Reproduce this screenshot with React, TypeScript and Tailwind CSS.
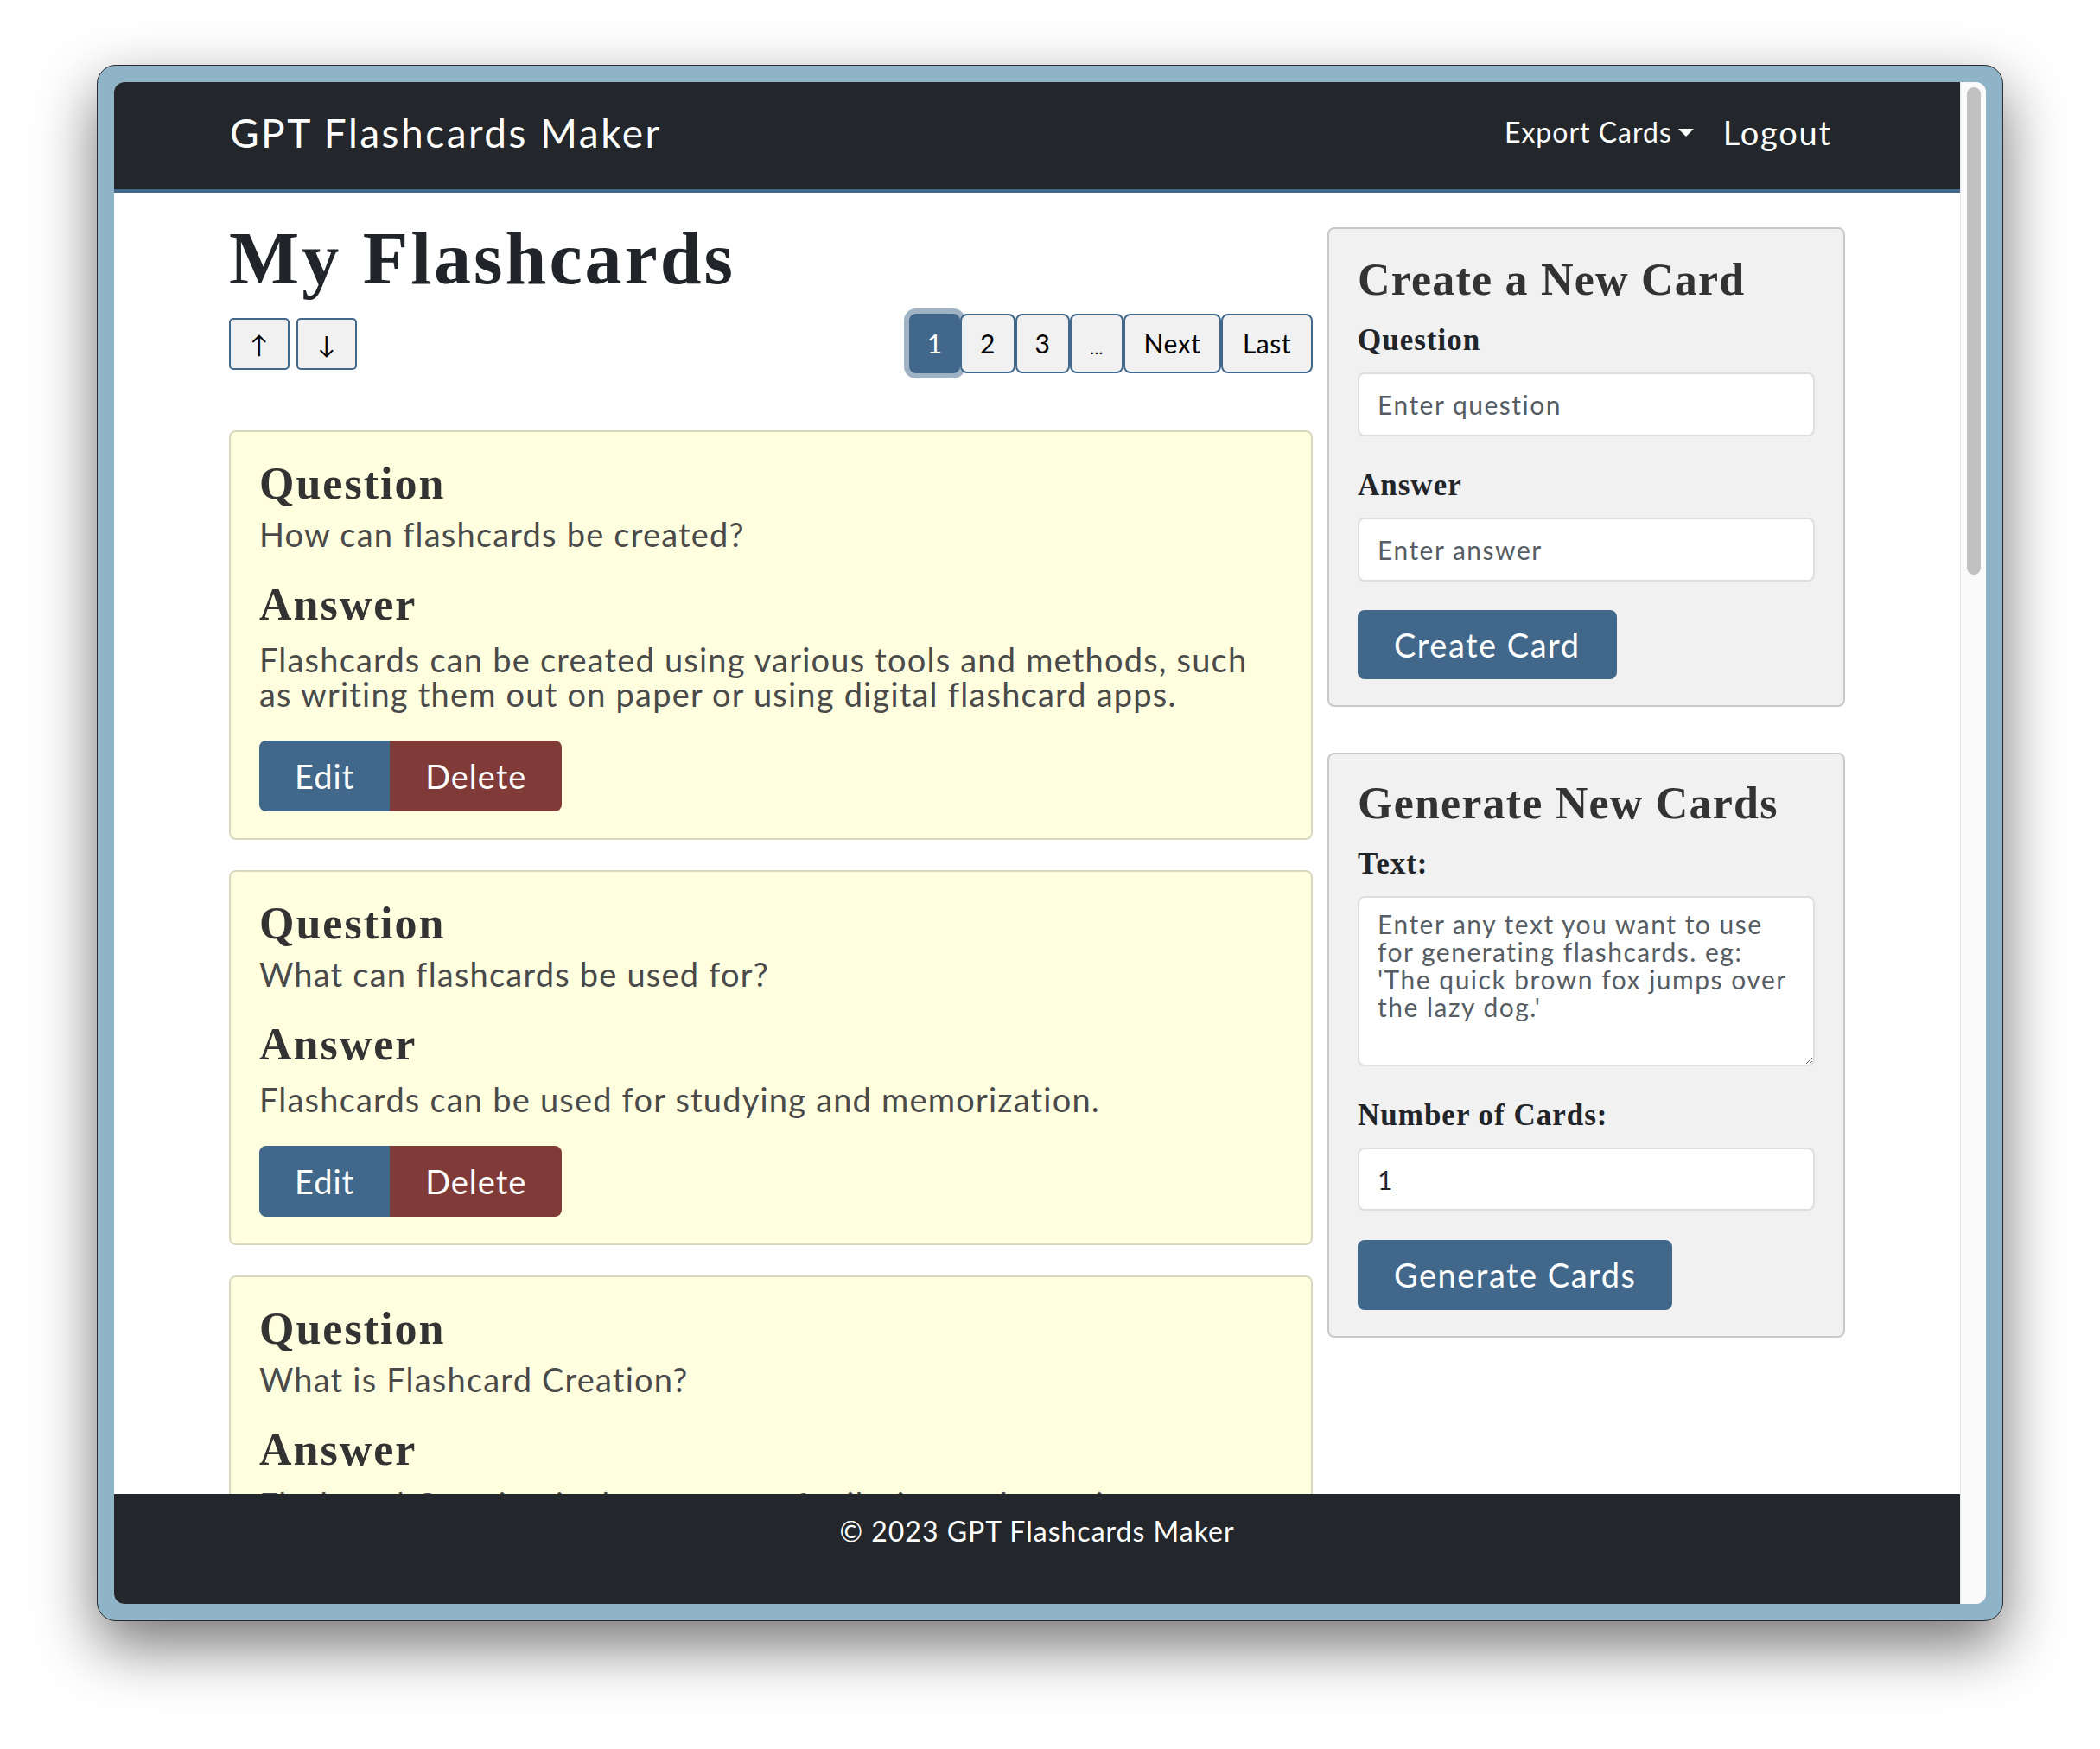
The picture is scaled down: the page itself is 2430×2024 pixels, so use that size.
import React from "react";

const cards = [
  {
    q: "How can flashcards be created?",
    a: "Flashcards can be created using various tools and methods, such as writing them out on paper or using digital flashcard apps.",
  },
  {
    q: "What can flashcards be used for?",
    a: "Flashcards can be used for studying and memorization.",
  },
  {
    q: "What is Flashcard Creation?",
    a: "Flashcard Creation is the process of tailoring and creating flashcards for studying and memorization.",
  },
];

const serif = "font-['Liberation_Serif',serif] font-bold";

function FlashCard({ q, a }: { q: string; a: string }) {
  return (
    <div className="rounded-[8px] border-2 border-[#d8d8bd] bg-[#ffffe0] px-[33px] pt-[29px] pb-[31px]">
      <h3 className={`${serif} text-[52px] leading-[62px] tracking-[2px] text-[#333]`}>Question</h3>
      <p className="mt-[7px] text-[38px] leading-[40px] tracking-[1.2px] text-[#4a4a4a]">{q}</p>
      <h3 className={`${serif} mt-[31px] text-[52px] leading-[62px] tracking-[2px] text-[#333]`}>Answer</h3>
      <p className="mt-[12px] text-[38px] leading-[40px] tracking-[1.2px] text-[#4a4a4a]">{a}</p>
      <div className="mt-[34px] flex">
        <button className="h-[82px] rounded-l-[8px] bg-[#41678a] px-[41px] text-[38px] tracking-[1px] text-white">Edit</button>
        <button className="h-[82px] rounded-r-[8px] bg-[#803a38] px-[41px] text-[38px] tracking-[1px] text-white">Delete</button>
      </div>
    </div>
  );
}

function Label({ children, first }: { children: React.ReactNode; first?: boolean }) {
  return (
    <label
      className={`${serif} block text-[35px] leading-[42px] tracking-[1px] text-[#212529] ${first ? "mt-[18px]" : "mt-[36px]"}`}
    >
      {children}
    </label>
  );
}

const inputCls =
  "mt-[16px] block w-full rounded-[8px] border-2 border-[#dedede] bg-white px-[21px] text-[30px] tracking-[1.5px] text-[#212529] placeholder:text-[#565d64] outline-none";

const pages = [
  { t: "2", w: "w-[64px]" },
  { t: "3", w: "w-[63px]" },
  { t: "...", w: "w-[62px]" },
  { t: "Next", w: "w-[113px]" },
  { t: "Last", w: "w-[106px]" },
];

function Pager() {
  return (
    <div className="flex items-center">
      <button className="relative flex h-[69px] w-[59px] items-center justify-center rounded-[8px] border-2 border-[#41678a] bg-[#41678a] text-[30px] text-white shadow-[0_0_0_6px_rgba(65,103,138,0.5)]">
        1
      </button>
      {pages.map((p) => (
        <button
          key={p.t}
          className={`relative flex h-[69px] items-center justify-center rounded-[8px] border-2 border-[#41678a] bg-[#f1f1f1] text-[30px] tracking-[0.5px] text-black ${p.w}`}
        >
          {p.t === "..." ? <span className="pt-[8px] text-[20px]">...</span> : p.t}
        </button>
      ))}
    </div>
  );
}

export default function App() {
  return (
    <div className="h-[2024px] w-[2430px] bg-white pl-[112px] pt-[75px] font-['Lato',sans-serif]">
      <div className="h-[1801px] w-[2206px] rounded-[22px] border border-[#2b2b2b] bg-[#8fb3c7] p-[19px] shadow-[0_28px_70px_rgba(0,0,0,0.55)]">
        <div className="flex h-full w-full overflow-hidden rounded-[12px] bg-white">
          {/* page */}
          <div className="flex w-[2136px] flex-col">
            <nav className="h-[128px] shrink-0 border-b-4 border-[#41678a] bg-[#23262b]">
              <div className="mx-auto flex h-full w-[1870px] items-center justify-between pb-[8px] pl-[1px] pr-[15px] text-white">
                <span className="text-[46px] tracking-[2.5px]">GPT Flashcards Maker</span>
                <div className="flex items-center">
                  <span className="text-[32px] tracking-[1px]">Export Cards</span>
                  <span className="ml-[7px] inline-block h-0 w-0 border-l-[9px] border-r-[9px] border-t-[9px] border-l-transparent border-r-transparent border-t-white" />
                  <span className="ml-[34px] text-[38px] tracking-[1.8px]">Logout</span>
                </div>
              </div>
            </nav>

            <main className="min-h-0 flex-1 overflow-hidden">
              <div className="mx-auto flex w-[1870px] gap-[17px]">
                {/* left column */}
                <div className="w-[1254px]">
                  <h1 className={`${serif} mt-[26px] text-[86px] leading-[100px] tracking-[3px] text-[#212529]`}>
                    My Flashcards
                  </h1>
                  <div className="mt-[14px] flex items-center justify-between">
                    <div className="flex gap-[8px]">
                      <button className="h-[60px] w-[70px] rounded-[5px] border-2 border-[#41678a] bg-[#f1f1f1] text-[28px] text-black">↑</button>
                      <button className="h-[60px] w-[70px] rounded-[5px] border-2 border-[#41678a] bg-[#f1f1f1] text-[28px] text-black">↓</button>
                    </div>
                    <Pager />
                  </div>
                  <div className="mt-[66px] flex flex-col gap-[35px]">
                    {cards.map((c) => (
                      <FlashCard key={c.q} q={c.q} a={c.a} />
                    ))}
                  </div>
                </div>

                {/* right column */}
                <div className="w-[599px] pt-[40px]">
                  <div className="rounded-[8px] border-2 border-[#c9c9c9] bg-[#f1f1f1] px-[33px] pt-[28px] pb-[30px]">
                    <h2 className={`${serif} text-[52px] leading-[62px] tracking-[1.2px] text-[#333]`}>Create a New Card</h2>
                    <Label first>Question</Label>
                    <input className={`${inputCls} h-[74px]`} placeholder="Enter question" />
                    <Label>Answer</Label>
                    <input className={`${inputCls} h-[74px]`} placeholder="Enter answer" />
                    <button className="mt-[33px] h-[80px] rounded-[8px] bg-[#41678a] px-[42px] text-[38px] tracking-[1.5px] text-white">
                      Create Card
                    </button>
                  </div>

                  <div className="mt-[53px] rounded-[8px] border-2 border-[#c9c9c9] bg-[#f1f1f1] px-[33px] pt-[26px] pb-[30px]">
                    <h2 className={`${serif} text-[52px] leading-[62px] tracking-[1.2px] text-[#333]`}>Generate New Cards</h2>
                    <Label first>Text:</Label>
                    <textarea
                      className={`${inputCls} h-[197px] pt-[14px] leading-[32px]`}
                      placeholder="Enter any text you want to use for generating flashcards. eg: 'The quick brown fox jumps over the lazy dog.'"
                    />
                    <Label>Number of Cards:</Label>
                    <input className={`${inputCls} h-[73px]`} defaultValue="1" />
                    <button className="mt-[34px] h-[81px] rounded-[8px] bg-[#41678a] px-[42px] text-[38px] tracking-[1.5px] text-white">
                      Generate Cards
                    </button>
                  </div>
                </div>
              </div>
            </main>

            <footer className="h-[127px] shrink-0 bg-[#23262b] pt-[25px] text-center text-[32px] leading-[36px] tracking-[1px] text-white">
              © 2023 GPT Flashcards Maker
            </footer>
          </div>

          {/* scrollbar */}
          <div className="w-[30px] shrink-0 border-l border-[#e6e6e6] bg-[#fafafa] px-[7px] pt-[6px]">
            <div className="h-[564px] w-[16px] rounded-full bg-[#c1c1c1]" />
          </div>
        </div>
      </div>
    </div>
  );
}
